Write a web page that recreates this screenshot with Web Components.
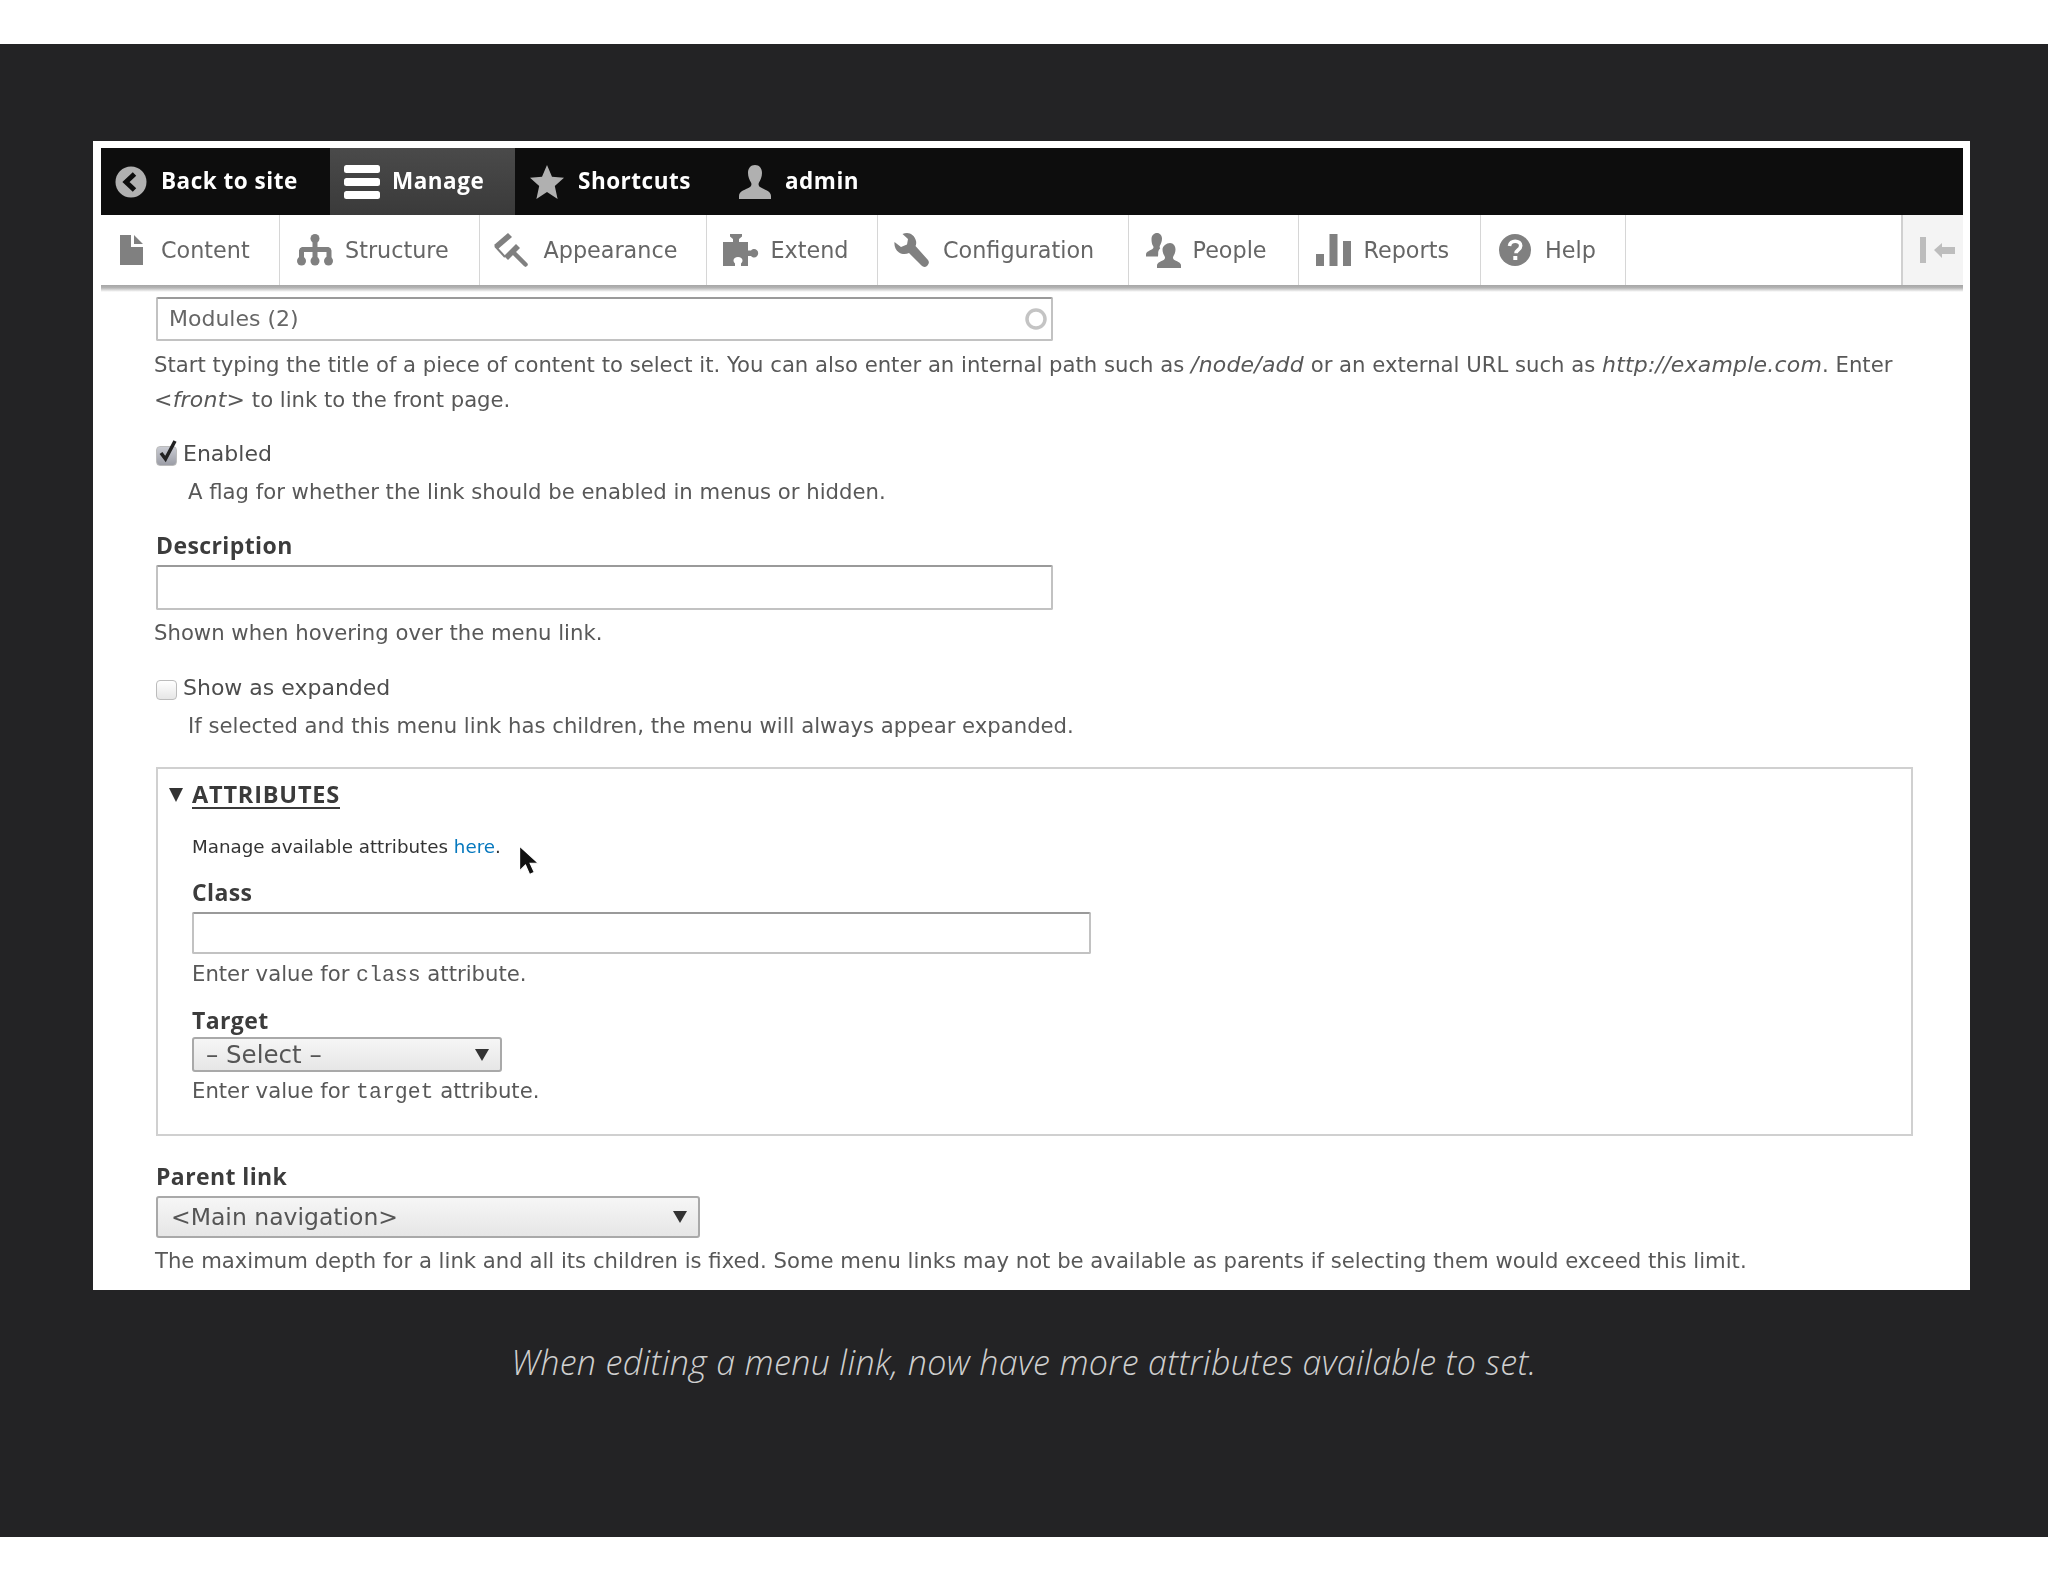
<!DOCTYPE html>
<html lang="en"><head><meta charset="utf-8"><title>Menu link attributes</title>
<style>
html,body{margin:0;padding:0;background:#fff}
body{font-family:"DejaVu Sans","Open Sans",sans-serif;color:#555}
em{font-style:italic;font-size:22px;letter-spacing:.2px}
code{font-family:"Liberation Mono",monospace;font-size:21.500px}
a{color:#0678be;text-decoration:none}
</style></head><body>
<x-stage>
  <x-shot>
    <x-toolbar>
      <x-tab w="229" tx="60" ix="14" i="back">Back to site</x-tab>
      <x-tab w="185" tx="62" ix="14" i="manage" active>Manage</x-tab>
      <x-tab w="209" tx="63" ix="15" i="star">Shortcuts</x-tab>
      <x-tab w="150" tx="61" ix="15" i="user">admin</x-tab>
    </x-toolbar>
    <x-tray>
      <x-item w="179" tx="60" ix="19" i="content">Content</x-item>
      <x-item w="199.5" tx="65" ix="17" i="structure">Structure</x-item>
      <x-item w="227" tx="64" ix="14" i="appearance">Appearance</x-item>
      <x-item w="171.5" tx="64" ix="16" i="extend">Extend</x-item>
      <x-item w="250.5" tx="65" ix="16" i="config">Configuration</x-item>
      <x-item w="170" tx="64" ix="17" i="people">People</x-item>
      <x-item w="182.5" tx="65" ix="17" i="reports">Reports</x-item>
      <x-item w="145" tx="64" ix="18" i="help">Help</x-item>
      <x-toggle></x-toggle>
    </x-tray>
    <x-form>
      <x-input w="897" h="44" spin style="--mt:12px">Modules (2)</x-input>
      <x-desc lh="35" style="--mt:6px;--ml:-2px">Start typing the title of a piece of content to select it. You can also enter an internal path such as <em>/node/add</em> or an external URL such as <em>http://example.com</em>. Enter<br><em>&lt;front&gt;</em> to link to the front page.</x-desc>
      <x-check checked style="--mt:22px">Enabled</x-check>
      <x-desc style="--mt:8px;--ml:32px">A flag for whether the link should be enabled in menus or hidden.</x-desc>
      <x-label style="--mt:24px">Description</x-label>
      <x-input w="897" h="45" style="--mt:4px"></x-input>
      <x-desc style="--mt:8px;--ml:-2px">Shown when hovering over the menu link.</x-desc>
      <x-check style="--mt:25px">Show as expanded</x-check>
      <x-desc style="--mt:8px;--ml:32px">If selected and this menu link has children, the menu will always appear expanded.</x-desc>
      <x-details summary="ATTRIBUTES" style="--mt:26px">
        <x-desc small style="--mt:23px">Manage available attributes <a href="#">here</a>.</x-desc>
        <x-label style="--mt:16px">Class</x-label>
        <x-input w="899" h="42" style="--mt:4px"></x-input>
        <x-desc style="--mt:5px">Enter value for <code>class</code> attribute.</x-desc>
        <x-label style="--mt:16px">Target</x-label>
        <x-select w="310" h="35" fs="24.500" pl="12" style="--mt:1px">– Select –</x-select>
        <x-desc style="--mt:4px">Enter value for <code>target</code> attribute.</x-desc>
        <x-cursor></x-cursor>
      </x-details>
      <x-label style="--mt:26px">Parent link</x-label>
      <x-select w="544" h="42" fs="23.500" pl="13" style="--mt:4px">&lt;Main navigation&gt;</x-select>
      <x-desc style="--mt:8px;--ml:-1px">The maximum depth for a link and all its children is fixed. Some menu links may not be available as parents if selecting them would exceed this limit.</x-desc>
    </x-form>
  </x-shot>
  <x-caption>When editing a menu link, now have more attributes available to set.</x-caption>
</x-stage>
<script>
const ICONS={
back:'<svg viewBox="0 0 32 32" width="32" height="32"><circle cx="16" cy="16" r="15.500" fill="#b0b0b0"/><path d="M19.500 8 11 16l8.500 8" fill="none" stroke="#0d0d0d" stroke-width="5"/></svg>',
manage:'<svg viewBox="0 0 36 34" width="36" height="34"><g fill="#fff"><rect y="0" width="36" height="8" rx="2.500"/><rect y="13" width="36" height="8" rx="2.500"/><rect y="26" width="36" height="8" rx="2.500"/></g></svg>',
star:'<svg viewBox="0 0 34 34" width="34" height="34"><path d="M17 0l5 11.800 12 1-9.200 8.100L27.600 34 17 27 6.400 34l2.800-13.100L0 12.800l12-1z" fill="#b0b0b0"/></svg>',
user:'<svg viewBox="0 0 32 34" width="32" height="34"><path d="M16 0c4.500 0 7 3.500 7 8 0 4-1.500 7-3 9.500-.8 1.500-.5 3.500 1 4.500 4 2.500 11 4 11 9v3H0v-3c0-5 7-6.500 11-9 1.500-1 1.800-3 1-4.500C10.500 15 9 12 9 8c0-4.500 2.500-8 7-8z" fill="#b0b0b0"/></svg>',
content:'<svg viewBox="0 0 23 30" width="23" height="30"><path d="M0 0h11v12h12v18H0zM14 0l9 9h-9z" fill="#808080"/></svg>',
structure:'<svg viewBox="0 0 36 32" width="36" height="32"><g fill="#808080"><circle cx="18" cy="4.500" r="4.500"/><circle cx="4.500" cy="27" r="4.500"/><circle cx="18" cy="27" r="4.500"/><circle cx="31.500" cy="27" r="4.500"/><path d="M15.500 6h5v7h11a4 4 0 0 1 3 3.500V25h-5v-7h-9v7h-5v-7H7v7H2v-8.500A4 4 0 0 1 5 13h10.500z"/></g></svg>',
appearance:'<svg viewBox="0 0 34 34" width="34" height="34"><g fill="#808080"><path d="M14 0 0 12l4 4L18 4z"/><path d="M10 23 22 11l4 4-12 12z"/></g><path d="M1 13 11 24" stroke="#808080" stroke-width="2"/><path d="M20 20 31.500 31.500" stroke="#808080" stroke-width="4.500" stroke-linecap="round"/></svg>',
extend:'<svg viewBox="0 0 36 32" width="36" height="32"><path d="M7 0h12v2.500l-3 2.500v3h9v8.500h3a3 3 0 0 1 3-1.500 4.200 4.200 0 0 1 0 8.400 3 3 0 0 1-3-1.400h-3V32h-7v-2.500c1-1 1.500-1.800 1.500-3 0-2-2-3.500-4.500-3.500s-4.500 1.500-4.500 3.500c0 1.200.5 2 1.500 3V32H0V8h10V5L7 2.500z" fill="#808080"/></svg>',
config:'<svg viewBox="0 0 35 34" width="35" height="34"><path d="M13 0C17 0 21 3 22 8 22.500 10 22 12 21.500 13L34 27C35.500 29 35 31 33 33 31 34.500 29 34 27.500 32.500L15 20C12 21.500 8 21.500 5 19.500 1.500 17 0 13 .5 9L7 14 13 11.500 14 6 8.500 1C10 .3 11.500 0 13 0z" fill="#808080"/></svg>',
people:'<svg viewBox="0 0 35 35" width="35" height="35"><g fill="#808080"><path d="M11 0c3 0 5 2.500 5 5.500S14.800 11 14 12.500c-.5 1-.4 2 .2 2.800-1.500 1.500-2.200 3.500-2 5.700l-.2 2.500H0v-2c0-3 4.500-4 6.500-5.500 1.200-.9 1.200-2 .6-3C6 11.500 5.500 9 5.500 6 5.500 2.500 8 0 11 0z"/><path d="M24 10c3.500 0 5.500 3 5.500 6.500 0 3-1.200 5-2.200 7-.6 1.200-.3 2.400.7 3.200 2 1.500 7 2.300 7 5.800V35H11v-2.500c0-3.500 5-4.300 7-5.800 1-.8 1.300-2 .7-3.200-1-2-2.200-4-2.200-7C16.500 13 20.500 10 24 10z"/></g></svg>',
reports:'<svg viewBox="0 0 35 32" width="35" height="32"><g fill="#808080"><rect y="20" width="8" height="12"/><rect x="13.500" width="8" height="32"/><rect x="27" y="7" width="8" height="25"/></g></svg>',
help:'<svg viewBox="0 0 32 32" width="32" height="32"><circle cx="16" cy="16" r="16" fill="#808080"/><path d="M10.500 12c.3-3 2.800-4.800 5.700-4.800 3.100 0 5.500 1.900 5.500 4.600 0 2-1.100 3.100-2.600 4.200-1.400 1-2.100 1.700-2.100 3.300" fill="none" stroke="#fff" stroke-width="3.600"/><rect x="14.300" y="22" width="4" height="4" fill="#fff"/></svg>'
};
class Base extends HTMLElement{
  render(css,html){this.attachShadow({mode:'open'}).innerHTML=`<style>${css}</style>${html}`;}
}
const FLOW=':host{display:block;margin-top:var(--mt,0);margin-left:var(--ml,0)}';
const REG='"DejaVu Sans","Open Sans",sans-serif', BOLD='"Open Sans","Liberation Sans",sans-serif';
customElements.define('x-stage',class extends Base{connectedCallback(){this.render(`
 :host{display:block;margin-top:44px;height:1493px;background:#232325;padding:97px 78px 0 93px;box-sizing:border-box}`,'<slot></slot>');}});
customElements.define('x-shot',class extends Base{connectedCallback(){this.render(`
 :host{display:block;height:1149px;background:#fff;padding:7px 7px 0 8px;box-sizing:border-box;filter:blur(.45px)}`,'<slot></slot>');}});
customElements.define('x-toolbar',class extends Base{connectedCallback(){this.render(`
 :host{display:flex;height:67px;background:#0d0d0d}`,'<slot></slot>');}});
customElements.define('x-tab',class extends Base{connectedCallback(){
 const a=this.getAttribute.bind(this);
 this.render(`
 :host{display:flex;align-items:center;box-sizing:border-box;height:67px;width:${a('w')}px;padding-left:${a('ix')}px;padding-bottom:2px;
  font:700 22.500px/63px ${BOLD};color:#fff;letter-spacing:.5px;
  ${this.hasAttribute('active')?'background:linear-gradient(#4a4a4a,#3a3a3a);':''}}
 .i{display:flex;width:${+a('tx')-+a('ix')}px;flex:none;margin-top:2px}
 `,`<span class="i">${ICONS[a('i')]}</span><slot></slot>`);
}});
customElements.define('x-tray',class extends Base{connectedCallback(){this.render(`
 :host{display:flex;height:70px;background:#fff;position:relative}
 .sh{display:block;position:absolute;left:0;right:0;top:70px;height:7px;background:linear-gradient(#a6a6a6 0,#b4b4b4 40%,#fff 100%)}`,
 '<slot></slot><span class="sh"></span>');}});
customElements.define('x-item',class extends Base{connectedCallback(){
 const a=this.getAttribute.bind(this);
 this.render(`
 :host{display:flex;align-items:center;box-sizing:border-box;height:70px;width:${a('w')}px;padding-left:${a('ix')}px;
  border-right:1.500px solid #d6d6d6;font:400 22.300px/70px ${REG};color:#666}
 .i{display:flex;width:${+a('tx')-+a('ix')}px;flex:none}
 `,`<span class="i">${ICONS[a('i')]}</span><slot></slot>`);
}});
customElements.define('x-toggle',class extends Base{connectedCallback(){this.render(`
 :host{display:flex;align-items:center;box-sizing:border-box;margin-left:auto;width:62px;height:70px;background:#f4f4f4;border-left:2px solid #d0d0d0;padding-left:17px}`,
 '<svg viewBox="0 0 36 26" width="36" height="26"><g fill="#bdbdbd"><rect y="0" width="6" height="26"/><path d="M14 13l8-7v4h13v7H22v4z"/></g></svg>');}});
customElements.define('x-form',class extends Base{connectedCallback(){this.render(`
 :host{display:block;padding-left:55px;padding-right:50px}`,'<slot></slot>');}});
customElements.define('x-input',class extends Base{connectedCallback(){
 const a=this.getAttribute.bind(this);
 this.render(FLOW+`
 :host{box-sizing:border-box;width:${a('w')}px;height:${a('h')}px;position:relative;background:#fff;border:2px solid #c2c2c2;border-top-color:#9a9a9a;border-radius:2px;
  padding-left:11px;font:400 22px/40px ${REG};color:#666}
 svg{position:absolute;right:3px;top:8px}`,
 `<slot></slot>${this.hasAttribute('spin')?'<svg width="24" height="24" viewBox="0 0 24 24"><circle cx="12" cy="12" r="9" fill="none" stroke="#c4c4c4" stroke-width="3.500"/></svg>':''}`);
}});
customElements.define('x-desc',class extends Base{connectedCallback(){
 const lh=this.getAttribute('lh')||30, small=this.hasAttribute('small');
 this.render(FLOW+`
 :host{font:400 ${small?18.300:21.200}px/${lh}px ${REG};color:${small?'#333':'#585858'}}`,'<slot></slot>');
}});
customElements.define('x-label',class extends Base{connectedCallback(){this.render(FLOW+`
 :host{font:700 23px/28px ${BOLD};padding-bottom:2px;color:#3c3c3c;letter-spacing:.4px}`,'<slot></slot>');}});
customElements.define('x-check',class extends Base{connectedCallback(){
 const on=this.hasAttribute('checked');
 this.render(FLOW+`
 :host{display:flex;align-items:center;height:30px;font:400 22px/30px ${REG};color:#4d4d4d}
 .b{position:relative;flex:none;box-sizing:border-box;width:21px;height:20px;margin-right:6px;margin-top:3px;border-radius:4px;border:1.500px solid #bcbcbc;
   background:${on?'linear-gradient(#c9cbd2,#9b9da6)':'linear-gradient(#fff,#e6e6e6)'}}
 svg{position:absolute;left:0;top:-9px}`,
 `<span class="b">${on?'<svg width="24" height="26" viewBox="0 0 24 26"><path d="M4 15l4.500 6L18 3" fill="none" stroke="#222" stroke-width="3.500"/></svg>':''}</span><slot></slot>`);
}});
customElements.define('x-details',class extends Base{connectedCallback(){this.render(FLOW+`
 :host{box-sizing:border-box;height:369px;border:2px solid #d0d0d0;padding:0 0 0 34px;position:relative}
 .s{display:flex;align-items:center;height:30px;margin:10px 0 1px 0;font:700 23.500px/30px ${BOLD};color:#3a3a3a;position:relative}
 .t{position:absolute;left:-23px;top:9px;width:0;height:0;border:7px solid transparent;border-top:14px solid #333;border-bottom:0}
 .u{text-decoration:underline;text-underline-offset:4px;text-decoration-thickness:2px;letter-spacing:.8px}`,
 `<div class="s"><i class="t"></i><span class="u">${this.getAttribute('summary')}</span></div><slot></slot>`);
}});
customElements.define('x-select',class extends Base{connectedCallback(){
 const a=this.getAttribute.bind(this),h=+a('h');
 this.render(FLOW+`
 :host{position:relative;box-sizing:border-box;width:${a('w')}px;height:${h}px;border:2px solid #a9a9a9;border-radius:3px;
  background:linear-gradient(#f6f6f6,#e6e6e6);padding-left:${a('pl')}px;font:400 ${a('fs')}px/${h-3}px ${REG};color:#555}
 i{position:absolute;right:11px;top:${(h-4-12)/2}px;width:0;height:0;border:7.500px solid transparent;border-top:12px solid #333;border-bottom:0}`,
 '<slot></slot><i></i>');
}});
customElements.define('x-cursor',class extends Base{connectedCallback(){this.render(`
 :host{position:absolute;left:359px;top:76px;display:block;width:24px;height:33px}`,
 '<svg width="24" height="33" viewBox="0 0 20 28"><path d="M2 1v21l5-5 3.500 8 4-1.800L11 15.500h7z" fill="#111" stroke="#fff" stroke-width="1"/></svg>');}});
customElements.define('x-caption',class extends Base{connectedCallback(){this.render(`
 :host{display:block;margin:49px 0 0 -93px;width:2048px;text-align:center;font:italic 300 34px/46px "Open Sans","Lato",sans-serif;letter-spacing:.36px;color:#cfcfcf}`,'<slot></slot>');}});
</script>
</body></html>
